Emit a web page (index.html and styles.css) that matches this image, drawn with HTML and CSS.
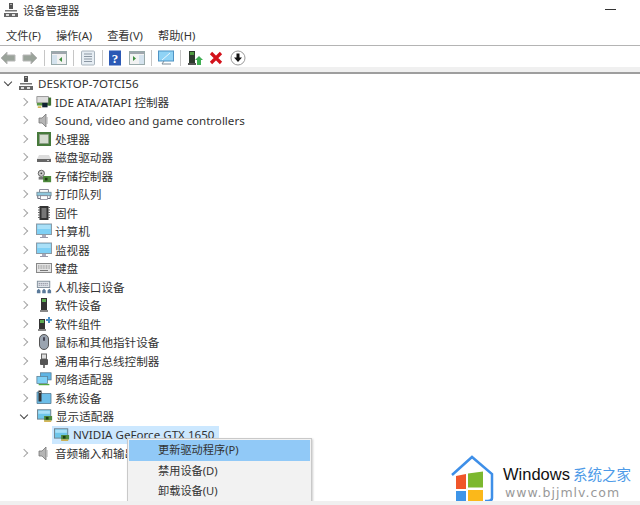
FILE: index.html
```html
<!DOCTYPE html>
<html lang="zh">
<head>
<meta charset="utf-8">
<title>设备管理器</title>
<link rel="stylesheet" href="styles.css">
</head>
<body>
<svg class="defs" width="0" height="0">
<defs>
<symbol id="pc" viewBox="0 0 16 16"><rect x="6" y="1" width="4" height="6" fill="#555"/><rect x="7" y="2" width="2" height="1" fill="#aaa"/><rect x="2" y="8" width="12" height="1.5" fill="#777"/><rect x="1" y="11" width="14" height="4" fill="#666"/><rect x="3" y="12" width="3" height="2" fill="#ddd"/><rect x="9" y="12" width="3" height="2" fill="#ddd"/></symbol>
<symbol id="screen" viewBox="0 0 16 16"><rect x="0.5" y="1" width="15" height="10.5" fill="#7fd0f5" stroke="#8c9aa5"/><rect x="1.5" y="2" width="13" height="4" fill="#a9e0f8"/><rect x="6" y="12" width="4" height="2" fill="#aab"/><rect x="4" y="14" width="8" height="1" fill="#99a"/></symbol>
<symbol id="gpu" viewBox="0 0 18 16"><rect x="0.5" y="1" width="15" height="10.5" fill="#6ec6ea" stroke="#6d7d88"/><rect x="1.5" y="2" width="13" height="3.5" fill="#a9e0f8"/><rect x="8" y="8" width="9" height="5" fill="#4d8a3c"/><rect x="10" y="9" width="3" height="3" fill="#1f3d15"/><rect x="8" y="13" width="8" height="1.5" fill="#c9a227"/></symbol>
<symbol id="speaker" viewBox="0 0 16 16"><path d="M3 6h3l4-4v13l-4-4H3z" fill="#b5b5b5" stroke="#777" stroke-width=".8"/><path d="M11 5v7" stroke="#aaa" stroke-width="1"/></symbol>
<symbol id="disk" viewBox="0 0 16 16"><path d="M3 6h10l2 4H1z" fill="#ddd"/><rect x="1" y="10" width="14" height="3" fill="#666"/><rect x="11" y="11" width="2" height="1" fill="#ccc"/></symbol>
<symbol id="cpu" viewBox="0 0 16 16"><rect x="1" y="1" width="14" height="14" fill="#477a3c"/><rect x="3.5" y="3.5" width="9" height="9" fill="#d5dcd0" stroke="#8a9a88" stroke-width=".6"/></symbol>
<symbol id="storage" viewBox="0 0 18 16"><circle cx="6" cy="5" r="3.5" fill="#ccc" stroke="#555"/><circle cx="6" cy="5" r="1" fill="#444"/><rect x="3" y="9" width="6" height="3" fill="#777"/><rect x="8" y="8" width="9" height="7" fill="#4d8a3c"/><rect x="10" y="10" width="3" height="3" fill="#1f3d15"/></symbol>
<symbol id="printer" viewBox="0 0 18 16"><path d="M4 6V3h10v3" fill="#fff" stroke="#778"/><rect x="1" y="6" width="16" height="4" fill="#8fc6dc" stroke="#6a7f8a" stroke-width=".8"/><path d="M2 10v3h3m8 0h3v-3" fill="none" stroke="#556"/><rect x="5" y="10" width="8" height="4" fill="#fff" stroke="#778" stroke-width=".8"/></symbol>
<symbol id="chip" viewBox="0 0 16 16"><rect x="3.5" y="1" width="9" height="14" fill="#333"/><path d="M2 2.5h2M2 5h2M2 7.500h2M2 10h2M2 12.500h2M12 2.500h2M12 5h2M12 7.500h2M12 10h2M12 12.500h2" stroke="#666"/><rect x="5.500" y="3" width="5" height="10" fill="#777"/></symbol>
<symbol id="keyboard" viewBox="0 0 16 16"><rect x="0.5" y="3.500" width="15" height="9" fill="#e4e4e4" stroke="#888"/><path d="M2 6h12M2 8h12" stroke="#888" stroke-dasharray="1 .6"/><rect x="4" y="10" width="8" height="1" fill="#777"/></symbol>
<symbol id="hid" viewBox="0 0 18 16"><rect x="1.500" y="1.500" width="14" height="7" fill="#dfe5ea" stroke="#7c8a96"/><path d="M3 4h11M3 6h11" stroke="#889" stroke-dasharray="1.500 .7"/><path d="M1 15v-3l2-2 2 2v3zM7 15v-3l2-2 2 2v3zM13 15v-3l2-2 2 2v3z" fill="#5a7a9a"/></symbol>
<symbol id="tower" viewBox="0 0 16 16"><rect x="5" y="1" width="6" height="12" fill="#333"/><rect x="6" y="2" width="4" height="3" fill="#5cab52"/><rect x="4" y="13" width="8" height="2" fill="#888"/></symbol>
<symbol id="towerplus" viewBox="0 0 16 16"><rect x="3" y="3" width="6" height="10" fill="#333"/><rect x="4" y="4" width="4" height="3" fill="#5cab52"/><rect x="2" y="13" width="8" height="2" fill="#888"/><path d="M10 3h2V1h2v2h2v2h-2v2h-2V5h-2z" fill="#4a90c8"/></symbol>
<symbol id="mouse" viewBox="0 0 16 16"><rect x="3.500" y="0.500" width="9" height="15" rx="4.500" fill="#9aa4b0" stroke="#555"/><rect x="7" y="3" width="2" height="4" rx="1" fill="#445"/></symbol>
<symbol id="usb" viewBox="0 0 16 16"><rect x="5.500" y="1" width="5" height="5" fill="#ddd" stroke="#666"/><rect x="4" y="6" width="8" height="6" rx="1" fill="#555"/><rect x="7" y="12" width="2" height="3" fill="#777"/></symbol>
<symbol id="net" viewBox="0 0 18 16"><rect x="5" y="1" width="12" height="8" fill="#5fb5e5" stroke="#56788c" stroke-width=".8"/><rect x="1" y="5" width="12" height="8" fill="#7fd0f5" stroke="#56788c" stroke-width=".8"/><rect x="3" y="13.500" width="12" height="1.500" fill="#52a83f"/></symbol>
<symbol id="sys" viewBox="0 0 16 16"><path d="M5 3.500h10v10H1V2h4z" fill="#6bbde8" stroke="#567a90" stroke-width=".8"/><rect x="2.500" y="0.500" width="3" height="11" fill="#333"/><rect x="3" y="2" width="2" height="1" fill="#aaa"/></symbol>
<symbol id="ide" viewBox="0 0 18 16"><rect x="1" y="2" width="13" height="7" fill="#ddd" stroke="#777" stroke-width=".8"/><rect x="1" y="9" width="15" height="3" fill="#5c9a45"/><rect x="7" y="9" width="6" height="5" fill="#123" /><rect x="14" y="3" width="3" height="9" fill="#3f6f32"/><rect x="2" y="13" width="4" height="1.500" fill="#c9a227"/></symbol>
</defs>
</svg>
<div class="window">
  <header class="titlebar">
    <svg class="title-icon" width="16" height="16"><use href="#pc"/></svg>
    <span class="title-text">设备管理器</span>
    <span class="min-btn"></span>
  </header>
  <nav class="menubar">
    <span>文件(F)</span><span>操作(A)</span><span>查看(V)</span><span>帮助(H)</span>
  </nav>
  <div class="toolbar">
    <svg class="tool" width="16" height="16" viewBox="0 0 16 16"><path d="M1 8l6-6v3h8v6H7v3z" fill="#9aa39a" stroke="#b8b8b8"/></svg>
    <svg class="tool" width="16" height="16" viewBox="0 0 16 16"><path d="M15 8L9 2v3H1v6h8v3z" fill="#9aa39a" stroke="#b8b8b8"/></svg>
    <i class="sep"></i>
    <svg class="tool" width="16" height="16" viewBox="0 0 16 16"><rect x=".5" y="1.500" width="15" height="13" fill="#f2f2f2" stroke="#9aa"/><rect x="1" y="2" width="14" height="2" fill="#9fa6ad"/><rect x="1" y="5" width="5" height="9" fill="#d5e3ee"/><path d="M11 7l-3 2.500 3 2.500z" fill="#3f8f3f"/></svg>
    <i class="sep"></i>
    <svg class="tool" width="16" height="16" viewBox="0 0 16 16"><rect x="1.500" y="1" width="13" height="14" rx="1" fill="#e6edf3" stroke="#a9b4bd"/><path d="M4 4h8M4 6.500h8M4 9h8M4 11.500h8" stroke="#8b97a3"/></svg>
    <i class="sep"></i>
    <svg class="tool tool-help" width="16" height="16" viewBox="0 0 16 16"><rect x="2" y="0.500" width="12" height="15" fill="#2b59b5"/><text x="8" y="13" class="qmark">?</text></svg>
    <svg class="tool" width="16" height="16" viewBox="0 0 16 16"><rect x=".5" y="1.500" width="15" height="13" fill="#f2f2f2" stroke="#9aa"/><rect x="1" y="2" width="14" height="2" fill="#9fa6ad"/><path d="M4 6l3 2.500L4 11z" fill="#3f8f3f"/><rect x="10" y="5" width="5" height="9" fill="#d5e3ee"/></svg>
    <i class="sep"></i>
    <svg class="tool" width="16" height="16" viewBox="0 0 16 16"><rect x=".5" y="1" width="15" height="10" fill="#8fd3f5" stroke="#4f93c4"/><path d="M12 3L4 10" stroke="#e8f6fd"/><path d="M6 11l-2 3h9" fill="none" stroke="#7a8a96"/></svg>
    <i class="sep"></i>
    <svg class="tool" width="16" height="16" viewBox="0 0 16 16"><rect x="2" y="1" width="6" height="12" fill="#2d3a2d"/><rect x="3" y="2" width="4" height="3" fill="#4f9b3f"/><rect x="1" y="13" width="8" height="2" fill="#555"/><path d="M12 6l4 4h-2v5h-4v-5H8z" fill="#3fae52"/></svg>
    <svg class="tool tool-x" width="16" height="16" viewBox="0 0 16 16"><path d="M3 3l10 10M13 3L3 13" stroke="#d3121b" stroke-width="3.200"/></svg>
    <svg class="tool" width="16" height="16" viewBox="0 0 16 16"><circle cx="8" cy="8" r="7" fill="#fff" stroke="#9a9a9a"/><path d="M6.500 3.500h3v4H12L8 12 4 7.500h2.500z" fill="#111"/></svg>
  </div>
  <div class="divider"></div>
  <main class="tree">
    <div class="row root"><span class="caret open"></span><svg class="icon" width="16" height="16"><use href="#pc"/></svg><span class="label">DESKTOP-7OTCI56</span></div>
    <div class="row"><span class="caret"></span><svg class="icon" width="16" height="16"><use href="#ide"/></svg><span class="label">IDE ATA/ATAPI 控制器</span></div>
    <div class="row"><span class="caret"></span><svg class="icon" width="16" height="16"><use href="#speaker"/></svg><span class="label">Sound, video and game controllers</span></div>
    <div class="row"><span class="caret"></span><svg class="icon" width="16" height="16"><use href="#cpu"/></svg><span class="label">处理器</span></div>
    <div class="row"><span class="caret"></span><svg class="icon" width="16" height="16"><use href="#disk"/></svg><span class="label">磁盘驱动器</span></div>
    <div class="row"><span class="caret"></span><svg class="icon" width="16" height="16"><use href="#storage"/></svg><span class="label">存储控制器</span></div>
    <div class="row"><span class="caret"></span><svg class="icon" width="16" height="16"><use href="#printer"/></svg><span class="label">打印队列</span></div>
    <div class="row"><span class="caret"></span><svg class="icon" width="16" height="16"><use href="#chip"/></svg><span class="label">固件</span></div>
    <div class="row"><span class="caret"></span><svg class="icon" width="16" height="16"><use href="#screen"/></svg><span class="label">计算机</span></div>
    <div class="row"><span class="caret"></span><svg class="icon" width="16" height="16"><use href="#screen"/></svg><span class="label">监视器</span></div>
    <div class="row"><span class="caret"></span><svg class="icon" width="16" height="16"><use href="#keyboard"/></svg><span class="label">键盘</span></div>
    <div class="row"><span class="caret"></span><svg class="icon" width="16" height="16"><use href="#hid"/></svg><span class="label">人机接口设备</span></div>
    <div class="row"><span class="caret"></span><svg class="icon" width="16" height="16"><use href="#tower"/></svg><span class="label">软件设备</span></div>
    <div class="row"><span class="caret"></span><svg class="icon" width="16" height="16"><use href="#towerplus"/></svg><span class="label">软件组件</span></div>
    <div class="row"><span class="caret"></span><svg class="icon" width="16" height="16"><use href="#mouse"/></svg><span class="label">鼠标和其他指针设备</span></div>
    <div class="row"><span class="caret"></span><svg class="icon" width="16" height="16"><use href="#usb"/></svg><span class="label">通用串行总线控制器</span></div>
    <div class="row"><span class="caret"></span><svg class="icon" width="16" height="16"><use href="#net"/></svg><span class="label">网络适配器</span></div>
    <div class="row"><span class="caret"></span><svg class="icon" width="16" height="16"><use href="#sys"/></svg><span class="label">系统设备</span></div>
    <div class="row"><span class="caret open"></span><svg class="icon" width="16" height="16"><use href="#gpu"/></svg><span class="label">显示适配器</span></div>
    <div class="row child"><span class="selected"><svg class="icon" width="16" height="16"><use href="#gpu"/></svg><span class="label">NVIDIA GeForce GTX 1650</span></span></div>
    <div class="row"><span class="caret"></span><svg class="icon" width="16" height="16"><use href="#speaker"/></svg><span class="label">音频输入和输出</span></div>
  </main>
  <div class="context-menu">
    <div class="item active">更新驱动程序(P)</div>
    <div class="item">禁用设备(D)</div>
    <div class="item">卸载设备(U)</div>
  </div>
  <div class="watermark">
    <svg class="wm-logo" width="48" height="51" viewBox="0 0 48 51">
      <path d="M3 21L23 3l20 17v24c0 2-2 3-4 3h-3" fill="none" stroke="#3e8fe8" stroke-width="2.500"/>
      <path d="M7 22l10-2v15H7z" fill="#f0562a"/><path d="M19 19.500l15-2v16H19z" fill="#7cb82f"/>
      <path d="M7 37h10v12l-10-1.500z" fill="#3e95e8"/><path d="M19 36h15v15l-15-1.500z" fill="#fbb81a"/>
    </svg>
    <div class="wm-text">
      <div class="wm-top"><span class="wm-win">Windows</span> <span class="wm-cn">系统之家</span></div>
      <div class="wm-url">www.bjjmlv.com</div>
    </div>
  </div>
</div>
</body>
</html>
```
FILE: styles.css
```css
* { box-sizing: border-box; }
html, body { margin: 0; padding: 0; }
body {
  width: 640px;
  height: 505px;
  overflow: hidden;
  background: #fff;
  font-family: "Noto Sans", "Noto Sans CJK SC", sans-serif;
  color: #2a2a2a;
  font-size: 12px;
}
.defs { position: absolute; }
.window { position: relative; width: 640px; height: 505px; overflow: hidden; border-bottom: 4px solid #f0f0f0; }
.titlebar { height: 24px; display: flex; align-items: center; padding: 0 0 4px 3px; position: relative; }
.title-icon { margin-right: 4px; }
.title-text { font-size: 11.300px; color: #333; }
.min-btn { position: absolute; left: 605px; top: 9px; width: 11px; height: 1px; background: #333; }
.menubar { height: 22px; display: flex; gap: 15px; padding-left: 6px; align-items: center; font-size: 11.200px; color: #333; border-bottom: 1px solid #b4b4b4; }
.toolbar { height: 21px; display: flex; align-items: center; gap: 6px; padding-top: 2px; }
.tool { flex: none; }
.tool-help { margin-left: -2px; }
.tool-x { margin-left: -1px; }
.sep { width: 1px; height: 16px; background: #c6c6c6; flex: none; }
.qmark { font: bold 13px "Liberation Serif", serif; fill: #fff; text-anchor: middle; }
.divider { height: 7px; background: linear-gradient(#f0f0f0 0 5px, #9e9e9e 5px 7px); }
.tree { display: grid; grid-auto-rows: 18.500px; }
.row { display: flex; align-items: center; padding-left: 21px; white-space: nowrap; }
.root { padding-left: 5px; }
.child { padding-left: 52px; }
.caret { width: 6px; height: 6px; border: solid #a6a6a6; border-width: 1.500px 1.500px 0 0; transform: rotate(45deg); margin-right: 9px; flex: none; }
.caret.open { transform: rotate(135deg); border-color: #444; margin: -3px 10px 0 0; }
.root .caret.open { margin-right: 7px; }
.row .icon { margin-right: 3px; flex: none; }
.root .icon { margin-right: 4px; }
.label { font-size: 11.600px; color: #333; }
.selected { display: flex; align-items: center; background: #cce8ff; padding-left: 2px; height: 18px; width: 167px; }
.context-menu { position: absolute; left: 127px; top: 438px; width: 185px; height: 70px; background: #f2f2f2; border: 1px solid #c9c9c9; padding: 1px; box-shadow: 1px 1px 2px rgba(0,0,0,.2); }
.item { height: 20px; line-height: 20px; padding-left: 29px; font-size: 11.200px; color: #333; }
.item.active { background: #91c9f7; height: 21px; }
.watermark { position: absolute; left: 449px; top: 454px; display: flex; gap: 6px; align-items: flex-start; }
.wm-text { padding-top: 11px; }
.wm-top { line-height: 18px; white-space: nowrap; }
.wm-win { font: 16.500px "Liberation Sans", sans-serif; color: #111; }
.wm-cn { font-size: 14.500px; color: #4e9be8; }
.wm-url { font: 12.500px "DejaVu Sans", sans-serif; letter-spacing: 1px; color: #999; line-height: 15px; padding-left: 2px; }
```
